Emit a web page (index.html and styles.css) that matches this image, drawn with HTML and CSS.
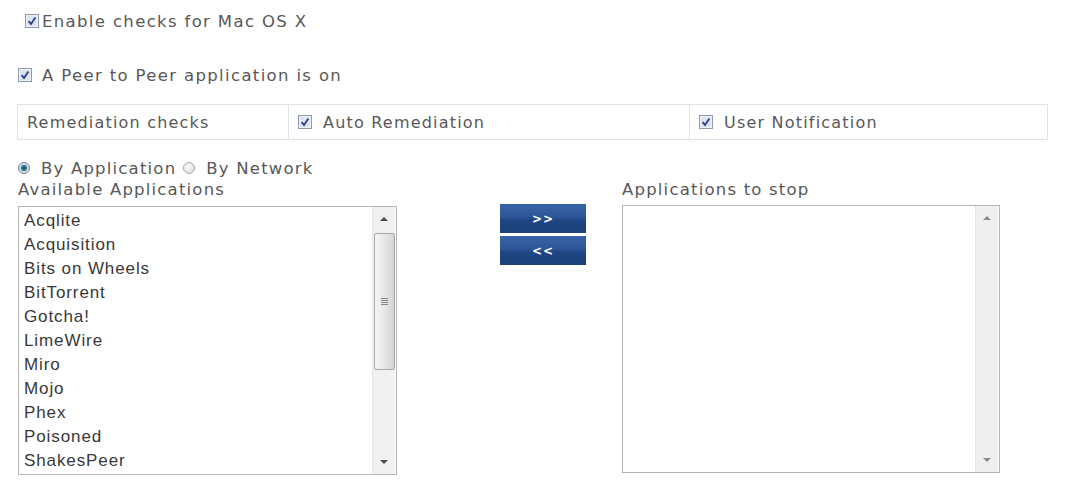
FILE: index.html
```html
<!DOCTYPE html>
<html lang="en">
<head>
  <meta charset="UTF-8">
  <title>Peer to Peer Checks</title>
  <link rel="stylesheet" href="styles.css">
</head>
<body>
  <div class="page">
    <label class="opt opt-main">
      <svg class="cb" viewBox="0 0 14 14" width="14" height="14"><rect x="0.5" y="0.5" width="13" height="13" fill="#eef1f7" stroke="#8e99ab"/><rect x="2" y="2" width="10" height="10" fill="#dde4f0"/><path d="M3.6 7.2 L6 10 L10.4 3.6" fill="none" stroke="#2b3f8c" stroke-width="1.8"/></svg>
      <span>Enable checks for Mac OS X</span>
    </label>

    <label class="opt opt-sub">
      <svg class="cb" viewBox="0 0 14 14" width="14" height="14"><rect x="0.5" y="0.5" width="13" height="13" fill="#eef1f7" stroke="#8e99ab"/><rect x="2" y="2" width="10" height="10" fill="#dde4f0"/><path d="M3.6 7.2 L6 10 L10.4 3.6" fill="none" stroke="#2b3f8c" stroke-width="1.8"/></svg>
      <span>A Peer to Peer application is on</span>
    </label>

    <div class="remediation">
      <div class="cell">Remediation checks</div>
      <div class="cell">
        <svg class="cb" viewBox="0 0 14 14" width="14" height="14"><rect x="0.5" y="0.5" width="13" height="13" fill="#eef1f7" stroke="#8e99ab"/><rect x="2" y="2" width="10" height="10" fill="#dde4f0"/><path d="M3.6 7.2 L6 10 L10.4 3.6" fill="none" stroke="#2b3f8c" stroke-width="1.8"/></svg>
        <span>Auto Remediation</span>
      </div>
      <div class="cell">
        <svg class="cb" viewBox="0 0 14 14" width="14" height="14"><rect x="0.5" y="0.5" width="13" height="13" fill="#eef1f7" stroke="#8e99ab"/><rect x="2" y="2" width="10" height="10" fill="#dde4f0"/><path d="M3.6 7.2 L6 10 L10.4 3.6" fill="none" stroke="#2b3f8c" stroke-width="1.8"/></svg>
        <span>User Notification</span>
      </div>
    </div>

    <div class="mode">
      <span class="radio on"></span><span class="mode-label">By Application</span>
      <span class="radio"></span><span class="mode-label">By Network</span>
    </div>

    <div class="picker">
      <div class="col col-left">
        <div class="col-title">Available Applications</div>
        <div class="listbox">
          <ul class="items">
            <li>Acqlite</li>
            <li>Acquisition</li>
            <li>Bits on Wheels</li>
            <li>BitTorrent</li>
            <li>Gotcha!</li>
            <li>LimeWire</li>
            <li>Miro</li>
            <li>Mojo</li>
            <li>Phex</li>
            <li>Poisoned</li>
            <li>ShakesPeer</li>
          </ul>
          <div class="scrollbar">
            <span class="arrow up"></span>
            <span class="thumb"><span class="grip"></span></span>
            <span class="track"></span>
            <span class="arrow down"></span>
          </div>
        </div>
      </div>

      <div class="movers">
        <button class="move">&gt;&gt;</button>
        <button class="move">&lt;&lt;</button>
      </div>

      <div class="col col-right">
        <div class="col-title">Applications to stop</div>
        <div class="listbox listbox-empty">
          <ul class="items"></ul>
          <div class="scrollbar">
            <span class="arrow up"></span>
            <span class="track"></span>
            <span class="arrow down"></span>
          </div>
        </div>
      </div>
    </div>
  </div>
</body>
</html>
```

FILE: styles.css
```css
:root {
  --label-color: #585858;
  --list-color: #383838;
  --line-color: #dfe3e9;
  --box-border: #b4b4b4;
}

* {
  box-sizing: border-box;
}

body {
  margin: 0;
  background: #fff;
  font-family: "DejaVu Sans", Verdana, sans-serif;
  font-size: 16.5px;
  letter-spacing: 1.35px;
  color: var(--label-color);
}

.page {
  padding: 11px 0 0 0;
}

.opt {
  display: flex;
  align-items: center;
  height: 20px;
}

.opt-main {
  padding-left: 25px;
  gap: 3px;
}

.opt-sub {
  margin-top: 34px;
  padding-left: 18px;
  gap: 10px;
}

.cb {
  display: block;
  flex: none;
}

.remediation {
  display: grid;
  grid-template-columns: 270px 401px 1fr;
  width: 1031px;
  height: 36px;
  margin: 19px 0 0 17px;
  border: 1px solid var(--line-color);
  font-size: 16px;
  letter-spacing: 1.2px;
}

.remediation .cell {
  display: flex;
  align-items: center;
  gap: 11px;
  padding-left: 9px;
}

.remediation .cell + .cell {
  border-left: 1px solid var(--line-color);
}

.mode {
  display: flex;
  align-items: center;
  height: 20px;
  margin: 18px 0 0 18px;
  letter-spacing: 1.2px;
}

.radio {
  width: 12px;
  height: 12px;
  border-radius: 50%;
  border: 1px solid #a6acb3;
  background: radial-gradient(circle at 40% 35%, #fafafa, #d6d9dc);
  margin-right: 11px;
}

.radio.on {
  border-color: #6d7f8c;
  background: radial-gradient(circle at 50% 50%, #1d5a78 0, #2a7396 2.5px, #cfd6dc 3.5px, #e9ecef 6px);
}

.mode-label {
  margin-right: 7px;
}

.picker {
  display: flex;
  align-items: flex-start;
  margin-top: 2px;
  padding-left: 18px;
}

.col-title {
  height: 20px;
  line-height: 20px;
  margin-bottom: 6px;
  letter-spacing: 1.2px;
}

.col-left {
  width: 379px;
}

.col-right {
  width: 378px;
  margin-left: 36px;
}

.listbox {
  display: flex;
  height: 269px;
  border: 1px solid var(--box-border);
  background: #fff;
}

.listbox-empty {
  height: 268px;
  margin-top: -1px;
}

.items {
  flex: 1;
  list-style: none;
  margin: 0;
  padding: 2px 0 0 5px;
  font-family: "Liberation Sans", Arial, sans-serif;
  font-size: 17px;
  letter-spacing: 0.9px;
  line-height: 24px;
  color: var(--list-color);
}

.scrollbar {
  width: 23px;
  display: flex;
  flex-direction: column;
  align-items: center;
  background: #f1f1f1;
  border-left: 1px solid #e6e6e6;
  margin-right: 1px;
}

.arrow {
  height: 24px;
  width: 100%;
  display: flex;
  align-items: center;
  justify-content: center;
}

.arrow::before {
  content: "";
  border-left: 4px solid transparent;
  border-right: 4px solid transparent;
}

.arrow.up::before {
  border-bottom: 4px solid #4a4a4a;
}

.arrow.down::before {
  border-top: 4px solid #4a4a4a;
}

.thumb {
  width: 21px;
  height: 137px;
  margin-top: 2px;
  border: 1px solid #a8a8a8;
  border-radius: 2px;
  background: linear-gradient(to right, #f6f6f6, #e4e4e4 60%, #d4d4d4);
  display: flex;
  align-items: center;
  justify-content: center;
}

.grip {
  width: 7px;
  height: 7px;
  background: repeating-linear-gradient(#8a8a8a 0 1px, transparent 1px 2px);
}

.track {
  flex: 1;
}

.listbox-empty .scrollbar {
  background: #efefef;
}

.listbox-empty .arrow::before {
  border-bottom-color: #8a8a8a;
  border-top-color: #8a8a8a;
}

.movers {
  display: flex;
  flex-direction: column;
  gap: 3px;
  margin-left: 103px;
  padding-top: 24px;
}

.move {
  width: 86px;
  height: 29px;
  border: none;
  border-radius: 0;
  padding: 0;
  font-family: "DejaVu Sans", Verdana, sans-serif;
  font-size: 12px;
  font-weight: bold;
  letter-spacing: 1px;
  color: #fff;
  background: linear-gradient(#3964a8, #2b5597 45%, #1f4683 55%, #1c407a);
  cursor: pointer;
}

.move:hover {
  background: #2b5597;
}
```
